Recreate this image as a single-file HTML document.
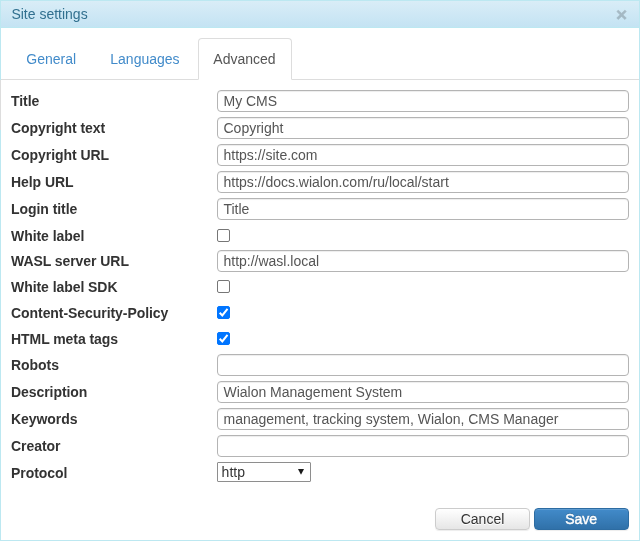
<!DOCTYPE html>
<html><head><meta charset="utf-8"><title>Site settings</title>
<style>
*{box-sizing:border-box}
html,body{margin:0;padding:0;background:#fff}
body{width:640px;height:541px;overflow:hidden;font-family:"Liberation Sans",sans-serif;font-size:14px;line-height:20px;color:#333;position:relative}
.dlg{position:absolute;left:0;top:0;width:640px;height:541px;border:1px solid #bce8f1;will-change:transform}
.hd{position:absolute;left:0;top:0;width:638px;height:27px;background:linear-gradient(#d9edf7,#c4e3f3);border-bottom:1px solid #bce8f1;color:#31708f}
.hd .t{position:absolute;left:10.4px;top:3px;font-size:14px;line-height:20px}
.hd .x{position:absolute;left:615px;top:3px;font-size:19px;line-height:21px;font-weight:bold;color:#000;opacity:.2;-webkit-text-stroke:0.5px #000}
.line{position:absolute;left:0;top:78px;width:638px;height:1px;background:#ddd}
.tabs{position:absolute;left:10px;top:37px;width:618px;height:42px}
.tab{position:absolute;top:0;height:42px;padding:10px 15.7px 10px 14.3px;border:1px solid transparent;border-radius:4px 4px 0 0;color:#428bca;white-space:nowrap}
.tab.on{color:#555;border-color:#ddd;border-bottom-color:#fff;background:#fff}
.lb{position:absolute;left:10px;font-weight:bold;color:#333;letter-spacing:-0.06px;white-space:nowrap;height:20px}
.in{position:absolute;left:216px;width:412px;height:22px;border:1px solid #b4b4b4;border-radius:4px;box-shadow:inset 0 1px 1px rgba(0,0,0,.075);color:#555;padding:0 6px 0 5.5px;letter-spacing:-0.01px;line-height:20px;white-space:nowrap;overflow:hidden;background:#fff}
.cb{position:absolute;left:216px;width:13px;height:13px;border:1px solid #767676;border-radius:2px;background:#fff}
.cb.ck{background:#0075ff;border-color:#0075ff}
.cb svg{position:absolute;left:-1px;top:-1px}
.sel{position:absolute;left:216px;top:461px;width:94px;height:20px;border:1px solid #8e8e8e;border-radius:1px;color:#333;padding:0 0 0 3.6px;line-height:18px;background:#fff}
.sel svg{position:absolute;left:80px;top:6px}
.btn{position:absolute;top:507px;width:95px;height:22px;border-radius:4px;text-align:center;line-height:20px;border:1px solid}
.b1{left:434px;color:#333;border-color:#ccc;background:linear-gradient(#fff,#e6e6e6);text-shadow:0 1px 0 #fff;box-shadow:inset 0 1px 0 rgba(255,255,255,.15),0 1px 1px rgba(0,0,0,.075)}
.b2{left:533px;color:#fff;border-color:#2d6ca2;background:linear-gradient(#428bca,#3071a9);-webkit-text-stroke:0.4px #fff;padding-right:0.8px;text-shadow:0 -1px 0 rgba(0,0,0,.2);box-shadow:inset 0 1px 0 rgba(255,255,255,.15),0 1px 1px rgba(0,0,0,.075)}
</style></head><body>
<div class="dlg">
<div style="position:absolute;left:-1px;top:79px;width:1px;height:50px;background:#ddd"></div>
<div class="hd"><span class="t">Site settings</span><span class="x">×</span></div>
<div class="line"></div>
<div class="tabs">
<div class="tab" style="left:0">General</div>
<div class="tab" style="left:84px">Languages</div>
<div class="tab on" style="left:187px">Advanced</div>
</div>

<div class="lb" style="top:90px">Title</div><div class="in" style="top:89px">My CMS</div>
<div class="lb" style="top:117px">Copyright text</div><div class="in" style="top:116px">Copyright</div>
<div class="lb" style="top:144px">Copyright URL</div><div class="in" style="top:143px">https://site.com</div>
<div class="lb" style="top:171px">Help URL</div><div class="in" style="top:170px">https://docs.wialon.com/ru/local/start</div>
<div class="lb" style="top:198px">Login title</div><div class="in" style="top:197px">Title</div>
<div class="lb" style="top:225px">White label</div><div class="cb" style="top:228px"></div>
<div class="lb" style="top:250px">WASL server URL</div><div class="in" style="top:249px">http://wasl.local</div>
<div class="lb" style="top:276px">White label SDK</div><div class="cb" style="top:279px"></div>
<div class="lb" style="top:302px">Content-Security-Policy</div><div class="cb ck" style="top:305px"><svg width="13" height="13" viewBox="0 0 13 13"><path d="M2.7 6.8 L5.3 9.4 L10.5 2.9" fill="none" stroke="#fff" stroke-width="2"/></svg></div>
<div class="lb" style="top:328px">HTML meta tags</div><div class="cb ck" style="top:331px"><svg width="13" height="13" viewBox="0 0 13 13"><path d="M2.7 6.8 L5.3 9.4 L10.5 2.9" fill="none" stroke="#fff" stroke-width="2"/></svg></div>
<div class="lb" style="top:354px">Robots</div><div class="in" style="top:353px"></div>
<div class="lb" style="top:381px">Description</div><div class="in" style="top:380px">Wialon Management System</div>
<div class="lb" style="top:408px">Keywords</div><div class="in" style="top:407px">management, tracking system, Wialon, CMS Manager</div>
<div class="lb" style="top:435px">Creator</div><div class="in" style="top:434px"></div>
<div class="lb" style="top:462px">Protocol</div><div class="sel">http<svg width="6" height="6" viewBox="0 0 6 6"><path d="M0 0H6L3 5.8Z" fill="#1a1a1a"/></svg></div>

<div class="btn b1">Cancel</div><div class="btn b2">Save</div>
</div>
</body></html>
